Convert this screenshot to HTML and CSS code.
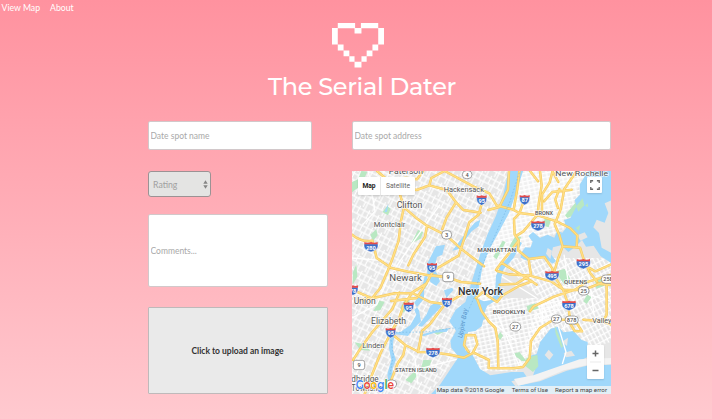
FILE: index.html
```html
<!DOCTYPE html>
<html lang="en">
<head>
<meta charset="utf-8">
<title>The Serial Dater</title>
<link rel="stylesheet" href="styles.css">
</head>
<body>
<nav class="nav"><a>View Map</a><a>About</a></nav>
<header class="brand">
  <svg class="heart" viewBox="0 0 9 8" preserveAspectRatio="none"><path fill="#fff" d="M1 0h3v.9h1V0h3v.9h1v2.9H8v1.1H7v1H6v1H5.1v1H3.9v-1H3v-1H2v-1H1V3.800H0V.9h1zM1 .95v2.850h1v1.100h1v1h.9v1h1.200v-1H6v-1h1V3.800h1V.95H5.100v.9H3.900v-.9z" fill-rule="evenodd"/></svg>
  <h1>The Serial Dater</h1>
</header>
<main class="form">
  <div class="left">
    <input class="field name" placeholder="Date spot name">
    <div class="rating"><span>Rating</span><svg width="5" height="9" viewBox="0 0 5 9"><path fill="#858585" d="M.3 3.700 2.500 .3 4.700 3.700zM.3 5.300h4.400L2.500 8.700z"/></svg></div>
    <input class="field comments" placeholder="Comments...">
    <button class="upload">Click to upload an image</button>
  </div>
  <div class="right">
    <input class="field address" placeholder="Date spot address">
    <div class="map">
      <svg class="tiles" viewBox="6 9 777 669" preserveAspectRatio="none">
        <defs>
          <pattern id="nj" width="31" height="43" patternUnits="userSpaceOnUse" patternTransform="rotate(27)"><path d="M3 0V43M18 0V26M0 8H31M0 26H31M26 26V43" stroke="#fff" stroke-width="3.500" fill="none"/></pattern>
          <pattern id="ny" width="15" height="24" patternUnits="userSpaceOnUse" patternTransform="rotate(-12)"><path d="M3 0V24M0 5H15M0 17H15" stroke="#fff" stroke-width="4" fill="none"/></pattern>
          <pattern id="qn" width="25" height="18" patternUnits="userSpaceOnUse" patternTransform="rotate(-28)"><path d="M3 0V18M15 0V18M0 5H25" stroke="#fff" stroke-width="4" fill="none"/></pattern>
          <g id="s2"><path d="M-15-10H15V-4C15 7 8 11 0 15C-8 11-15 7-15-4Z" fill="#3b6fc9" stroke="#fff" stroke-width="1.500"/><path d="M-15-15Q-8-11 0-15Q8-11 15-15V-8H-15Z" fill="#e34b4b"/></g>
          <g id="s3"><path d="M-21-10H21V-4C21 7 12 10 0 15C-12 10-21 7-21-4Z" fill="#3b6fc9" stroke="#fff" stroke-width="1.500"/><path d="M-20-15Q-10-11 0-15Q10-11 20-15V-8H-20Z" fill="#e34b4b"/></g>
        </defs>
        <path fill="#e6e6e6" d="M0 0H790V690H0z"/>
        <path fill="url(#nj)" d="M0 0H480L380 300 330 420 325 560 230 690H0z"/>
        <path fill="#f0f0f0" d="M515 0H710L640 160 560 200 480 270 435 390 395 400 400 270z"/>
        <path fill="url(#ny)" d="M515 0H720L650 180 480 270 430 390H650L500 610H350V380z"/>
        <path fill="url(#qn)" d="M440 270H790V520L500 600 570 390z"/>
        <g fill="#b9e8c2">
          <path d="M6 42l18-8 10-25 18 2-20 42-26 20zM97 132l15-18 10 8-8 20zM61 200l18-16 4 18-14 16zM184 226l20-40 16 6-8 20zM8 350l14-24-3-38-10 25zM430 266l28-48 9 4-27 52zM574 172l14-26 16 7-8 25zM645 142l33-40 22 12-17 24-31 12zM478 235l18-31 18 3-21 38zM615 310l29-7 17 30-18 17zM735 337l27-7v24l-23 8zM530 414l25-8 12 15-33 11zM14 523l29 6 18 19-30-2zM166 636l25-23 12 8-19 25zM211 608l9-33 25 2-11 30zM246 492l29-10 12 8-25 10zM150 420l18-31 11 9-17 37zM442 504l9-12 8 11-9 14zM70 429l18-31 16 3-13 26zM700 400l12-21 12 9-14 20z"/>
        </g>
        <g fill="#a0d8fb">
          <path d="M477 0H522L500 70 477 135 445 195 414 252 397 299 388 350 383 392 402 400 421 397 435 378 438 323 450 295 472 270 493 240 507 220 516 225 490 271 460 305 453 338 449 390 411 414 402 438 415 451 400 455 395 475 376 489 355 492 347 510 345 547 366 557 390 603 421 622 485 612 520 612 531 628 484 640 496 655 570 640 650 608 710 593 790 590V690H232L270 650 326 566 304 540 301 519 318 488 298 460 317 425 346 402 362 351 375 309 390 260 412 200 438 143 460 80z"/>
          <path d="M719 0H790V94L764 106 775 135 764 164 740 155 730 178 747 195 755 239 785 255V286L752 265 731 233 708 236 696 216 675 237 655 252 633 232 609 238 604 260 618 279 608 287 583 270 554 267 534 279 512 269 513 255 526 238 541 239 548 221 535 204 549 192 570 209 593 200 613 209 622 188 637 194 649 179 642 156 661 150 680 115 674 96 690 80 689 50z"/>
          <path d="M570 523 602 482 625 476 640 493 671 489 695 516 713 522V567L675 585 603 611 573 627 547 629 557 599 530 594 541 563 560 558z"/>
          <path d="M258 235 285 230 277 260 261 267 252 303 262 318 270 340 259 354 241 342 238 323 224 325 213 374 193 404 207 427 213 460 187 486 174 504 137 499 130 518 128 546 138 575 128 600 127 632 116 646 112 619 124 575 117 540 121 496 153 491 181 471 199 440 193 426 207 410 222 392 222 366 233 348 231 288 245 260z"/>
          <path d="M241 413 263 400 274 416 249 442 216 476 204 474 229 440zM340 204 374 164 391 155 386 175 365 190 325 244 307 248zM282 367l25-8 3 8-21 23zM115 107l-12 26 8-2zM212 500l38-10 48-10-8 11-35 3-35 11z"/>
        </g>
        <path fill="#f3f3f3" d="M492 633 550 622 630 594 689 574 783 570V588L708 592 642 607 570 637 505 653z"/>
        <path d="M588 257l5-17 13 8-5 25zM682 202l22-9 9 15-22 10zM623 197l8-3-2 9zM584 561l12-16 14 15-12 16zM636 521l18-12-3 25zM559 526l9 4-9 8zM641 555l23-7 11 15-27 5z" fill="#e6e6e6"/>
        <path fill="#b9e8c2" d="M530 570l32-10 3 35-16 17-26-20zM678 115l20-24 5 21-18 19zM705 113l8-7 1 11zM488 557l20-5 22 28-15-1zM614 472l14 33 11 30-5 5-17-43zM677 180l13-9-3 18z"/>
        <g fill="none" stroke="#fff" stroke-width="4">
          <path d="M6 450 80 410 115 330 184 230 270 110M55 9 75 130 38 170M6 270 90 277 138 310M150 525 195 570 204 650M202 604 320 574M410 450 500 520M430 410 510 600M575 400 580 500M455 325 560 390M590 340 783 400M642 260 662 390M710 270 732 440M700 315 640 485M625 475 648 552 637 588"/>
        </g>
        <g fill="none" stroke="#f7cb60" stroke-width="7.500" stroke-linejoin="round" stroke-linecap="round">
          <g id="roads"><path d="M6 200Q35 224 67 218L80 270 124 300 175 311 235 322 293 328M81 9 105 29 145 64 162 118 204 154 231 173 290 203 335 244 402 295M162 118 153 158 146 218 128 270 113 309 91 360 66 391 30 397M72 60 145 54 200 66 238 52 290 66 318 103 340 126 392 134M219 9 201 34 165 29M238 52 244 30 284 9 370 55 418 76 440 112 489 125 508 135 563 142 620 160 660 180 682 202 680 235M318 103 290 148 277 183M231 173 225 207 190 260 175 292M398 98 386 140 358 163 343 211 326 263 280 290 250 308 229 347 187 373 160 414 148 450 122 495 92 555 60 635 44 678M6 365 66 391 134 376 187 375 240 402 290 409M148 374 127 423 67 492 28 547 9 576M229 347 200 390 124 399M245 322 293 328 333 342 390 347M122 495 166 531 207 552 248 553 300 560 342 569 371 554 417 576 416 600 490 601 519 597 539 570 543 519 570 480 609 456 650 455M334 380 283 411 240 468 216 489 204 552M166 531 160 561 144 584 130 620 120 645"/>
          <path d="M477 9 474 65 448 117 415 126M523 95 508 137 492 153 494 200 506 218 487 243 454 284 438 306M508 9 502 62 491 125M570 9 575 52 566 108 563 140 520 190 500 203M540 9 564 40M608 9 599 43 576 80 576 130M680 9 643 63 632 124 614 169 628 201 638 235 625 270 610 320 639 365 654 407 660 455M665 65 607 72 582 100M628 63 616 95 624 120M638 235 690 239 703 280 720 314 742 342M506 218 504 247 536 273 583 267 607 302 610 328M442 309 477 319 540 323 605 341 640 365 700 366 784 333M454 284 505 315 545 340 560 350M449 350 500 347 543 320 536 275M377 390 398 373 441 402 456 383 507 354 545 340M382 395 395 430 417 461 436 480 443 518 445 598M369 553 382 528 375 502 348 501 342 531 356 552M540 430 551 415 612 386 675 365 708 343 784 320M640 365 620 351M661 468 674 489 696 490 681 467 667 464M700 455 758 460 784 470M743 347 784 351M770 351 770 440 760 458M700 290 736 310 784 289M607 9 625 42"/></g>
        </g>
        <use href="#roads" fill="none" class="road-core"/>
        <path d="M508 14 480 100 425 225 390 310 374 385 345 450 325 485M137 493 225 492 318 479M123 516 130 560 120 620" fill="none" stroke="#77b9e6" stroke-width="2" stroke-dasharray="5 5"/>
        <g class="shields">
          <use href="#s2" x="395" y="97"/><text x="395" y="104">95</text>
          <use href="#s2" x="524" y="96"/><text x="524" y="103">87</text>
          <use href="#s3" x="564" y="174"/><text x="564" y="181">278</text>
          <use href="#s3" x="63" y="237"/><text x="63" y="245">280</text>
          <use href="#s2" x="246" y="300"/><text x="246" y="307">95</text>
          <use href="#s3" x="700" y="288"/><text x="700" y="295">295</text>
          <use href="#s3" x="606" y="324"/><text x="606" y="331">495</text>
          <use href="#s2" x="9" y="367"/><text x="9" y="375">78</text>
          <use href="#s2" x="291" y="404"/><text x="291" y="411">78</text>
          <use href="#s2" x="176" y="418"/><text x="176" y="426">95</text>
          <use href="#s3" x="657" y="413"/><text x="657" y="420">678</text>
          <use href="#s2" x="122" y="495"/><text x="122" y="502">95</text>
          <use href="#s3" x="249" y="554"/><text x="249" y="561">278</text>
        </g>
        <g fill="#fff" stroke="#777" stroke-width="2"><rect x="337" y="8" width="29" height="24" rx="12"/><rect x="275" y="188" width="30" height="25" rx="12"/><rect x="278" y="313" width="33" height="28" rx="7"/><rect x="685" y="356" width="32" height="25" rx="12"/><rect x="754" y="321" width="42" height="25" rx="12"/><rect x="480" y="463" width="32" height="26" rx="13"/><rect x="604" y="441" width="31" height="24" rx="12"/><rect x="645" y="444" width="40" height="24" rx="12"/><rect x="10" y="577" width="34" height="28" rx="7"/><rect x="108" y="636" width="32" height="24" rx="12"/></g>
        <g class="routes"><text x="351" y="27">4</text><text x="290" y="207">3</text><text x="294" y="334">9</text><text x="701" y="375">25</text><text x="775" y="340">25B</text><text x="496" y="482">27</text><text x="619" y="459">27</text><text x="665" y="462">878</text><text x="27" y="598">9</text></g>
        <g class="places">
          <text x="116" y="18" textLength="103" lengthAdjust="spacingAndGlyphs">Paterson</text><text x="281" y="71" textLength="121" lengthAdjust="spacingAndGlyphs" class="sm">Hackensack</text><text x="140" y="120" textLength="77" lengthAdjust="spacingAndGlyphs">Clifton</text><text x="71" y="177" textLength="95" lengthAdjust="spacingAndGlyphs" class="sm">Montclair</text><text x="616" y="25" textLength="158" lengthAdjust="spacingAndGlyphs" class="sm">New Rochelle</text><text x="118" y="339" textLength="98" lengthAdjust="spacingAndGlyphs" class="lg">Newark</text><text x="11" y="407" textLength="66" lengthAdjust="spacingAndGlyphs">Union</text><text x="63" y="467" textLength="105" lengthAdjust="spacingAndGlyphs">Elizabeth</text><text x="37" y="540" textLength="66" lengthAdjust="spacingAndGlyphs" class="sm">Linden</text><text x="4" y="641" textLength="82" lengthAdjust="spacingAndGlyphs">dbridge</text><text x="4" y="669" textLength="96" lengthAdjust="spacingAndGlyphs">Township</text><text x="727" y="466" textLength="57" lengthAdjust="spacingAndGlyphs" class="sm">Valley</text>
          <text x="324" y="381" textLength="135" lengthAdjust="spacingAndGlyphs" class="city">New York</text>
          <g class="borough"><text x="555" y="141" textLength="54" lengthAdjust="spacingAndGlyphs">BRONX</text><text x="382" y="252" textLength="116" lengthAdjust="spacingAndGlyphs">MANHATTAN</text><text x="642" y="348" textLength="70" lengthAdjust="spacingAndGlyphs">QUEENS</text><text x="428" y="438" textLength="97" lengthAdjust="spacingAndGlyphs">BROOKLYN</text><text x="135" y="613" textLength="125" lengthAdjust="spacingAndGlyphs">STATEN ISLAND</text></g>
        </g>
        <text class="bay" transform="translate(337 511) rotate(-80)" textLength="90">Upper Bay</text>
        <path d="M258 654H784V678H258z" fill="#f5f5f5" opacity=".78"/>
        <g class="legal"><text x="260" y="671" textLength="203" lengthAdjust="spacingAndGlyphs">Map data ©2018 Google</text><text x="485" y="671" textLength="109" lengthAdjust="spacingAndGlyphs">Terms of Use</text><text x="615" y="671" textLength="156" lengthAdjust="spacingAndGlyphs">Report a map error</text></g>
        <text class="logo" x="17" y="663" textLength="115" lengthAdjust="spacingAndGlyphs"><tspan fill="#4285f4">G</tspan><tspan fill="#ea4335">o</tspan><tspan fill="#fbbc05">o</tspan><tspan fill="#4285f4">g</tspan><tspan fill="#34a853">l</tspan><tspan fill="#ea4335">e</tspan></text>
      </svg>
      <div class="types"><b>Map</b><span>Satellite</span></div>
      <div class="full"><svg width="10" height="10" viewBox="0 0 9 9"><path d="M.7 2.800V.7H2.800M6.200 .7h2.100V2.800M8.300 6.200v2.100H6.200M2.800 8.300H.7V6.200" fill="none" stroke="#666" stroke-width="1.200"/></svg></div>
      <div class="zoom"><svg width="17" height="34" viewBox="0 0 17 34"><path d="M5.500 8.500h6M8.500 5.500v6M5.500 25.500h6" stroke="#666" stroke-width="1.500"/><path d="M3 17h11" stroke="#e3e3e3" stroke-width=".7"/></svg></div>
    </div>
  </div>
</main>
</body>
</html>
```

FILE: styles.css
```css
* { box-sizing: border-box; }
html { height: 100%; }
body { margin: 0; height: 419px; overflow: hidden; font-family: Lato, sans-serif; font-size: 8.5px; background: linear-gradient(#ff929f, #ffc9cf); }
.nav { display: flex; gap: 10px; padding: 2px 1.5px 0; height: 23px; color: #fff; font-size: 8.7px; line-height: 11px; }
.brand { display: flex; flex-direction: column; align-items: center; height: 98px; padding-left: 12px; }
.heart { width: 52px; height: 45px; margin-right: 9px; }
h1 { margin: 3px 0 0; font: 500 24px/31px Montserrat, Inter, sans-serif; color: #fff; letter-spacing: -.32px; white-space: nowrap; }
.form { display: grid; grid-template-columns: 180px 259px; column-gap: 24px; margin-left: 148px; width: 463px; }
.left, .right { display: flex; flex-direction: column; align-items: flex-start; }
.field { display: block; border: 1px solid #d2c8ca; border-radius: 2px; background: #fff; padding: 0 1.5px 0; font: 8.5px Lato, sans-serif; outline: 0; }
.field::placeholder { color: #a9a9a9; opacity: 1; }
.name { width: 164px; height: 29px; }
.address { width: 259px; height: 29px; }
.rating { display: flex; align-items: center; justify-content: space-between; width: 63px; height: 26px; margin-top: 21px; padding: 0 2px 0 4px; border: 1px solid #9c9294; border-radius: 3px; background: #e4e4e3; color: #a0a0a0; font-size: 8.7px; }
.comments { width: 180px; height: 73px; margin-top: 17px; }
.upload { width: 180px; height: 87px; margin-top: 20px; padding: 0 1px 0 0; border: 1px solid #bfb9ba; border-radius: 1px; background: #eaeaea; color: #333; font: 700 8.5px Lato, sans-serif; }
.map { position: relative; width: 259px; height: 223px; margin-top: 21px; overflow: hidden; font-family: Roboto, sans-serif; }
.tiles { display: block; width: 259px; height: 223px; }
.road-core { stroke: #ffdf86; stroke-width: 4; }
.tiles text { font-family: Roboto, sans-serif; }
.shields text { fill: #fff; font-size: 17px; font-weight: 700; text-anchor: middle; }
.routes text { fill: #555; font-size: 17px; font-weight: 500; text-anchor: middle; }
.places text { font-size: 26px; fill: #555; stroke: #fff; stroke-width: 4; stroke-opacity: .8; paint-order: stroke; }
.places .sm { font-size: 24px; }
.places .lg { font-size: 29px; }
.places .city { font-size: 32px; font-weight: 500; fill: #333; }
.places .borough text { font-size: 18.5px; font-weight: 500; }
.tiles .bay { font-size: 20px; font-style: italic; fill: #5b96cb; }
.legal text { font-size: 18.5px; fill: #444; }
.tiles .logo { font: 600 36px Montserrat, sans-serif; stroke: #fff; stroke-width: 3; paint-order: stroke; }
.types, .full, .zoom { position: absolute; background: #fff; border-radius: 1px; box-shadow: 0 1px 2px #0002; }
.types { left: 6px; top: 6px; display: flex; width: 57px; height: 18px; font-size: 6.7px; line-height: 18px; }
.types b { width: 23px; text-align: center; font-weight: 700; color: #222; border-right: 1px solid #e8e8e8; }
.types span { flex: 1; text-align: center; color: #666; }
.full { right: 9px; top: 6px; width: 15px; height: 16px; display: grid; place-items: center; }
.zoom { right: 7px; bottom: 15px; width: 17px; height: 34px; }
.zoom svg { display: block; }
```
